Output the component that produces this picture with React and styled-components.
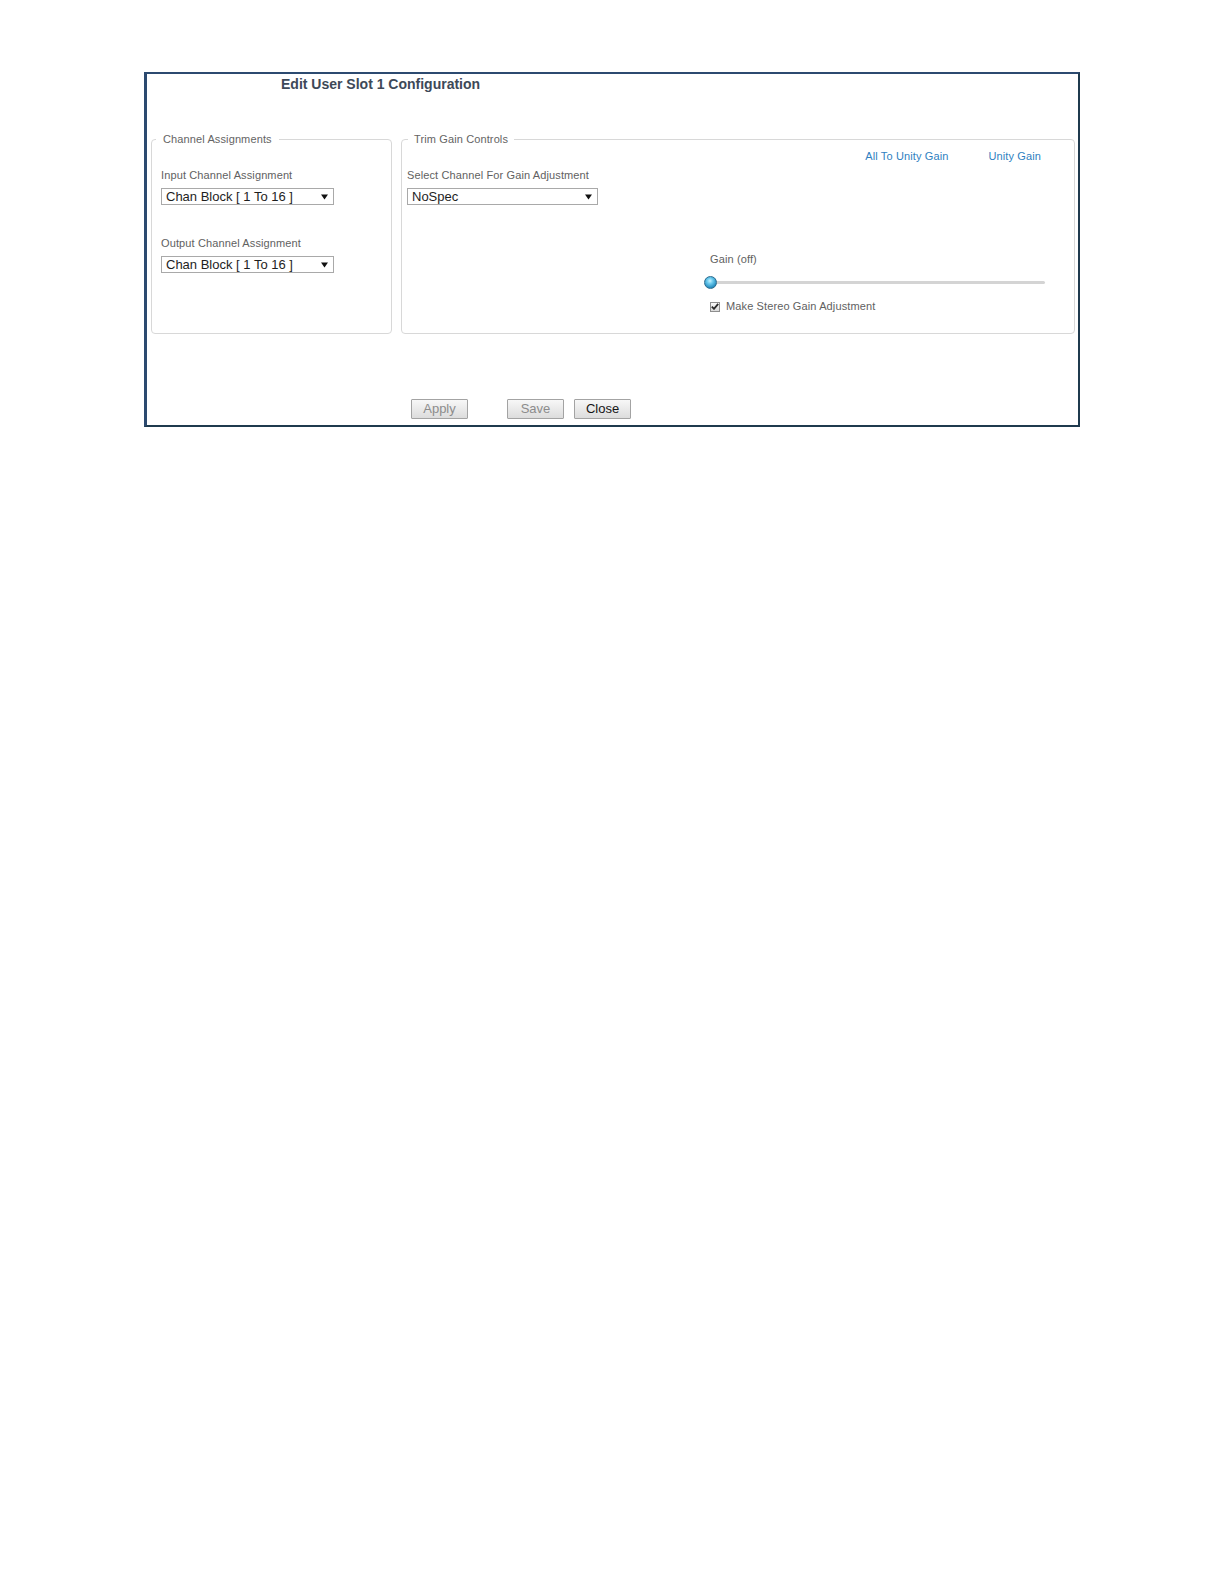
import React from "react";
import styled, { createGlobalStyle } from "styled-components";

const GlobalStyle = createGlobalStyle`
  html, body { margin: 0; padding: 0; background: #ffffff; }
  body { font-family: "Liberation Sans", Arial, sans-serif; }
  * { box-sizing: border-box; }
`;

const Page = styled.div`
  width: 1224px;
  min-height: 1584px;
  padding: 72px 0 0 144px;
`;

const Dialog = styled.div`
  width: 936px;
  height: 355px;
  border-style: solid;
  border-width: 2px 2px 2px 3px;
  border-color: #2c4a70 #1f3a4e #1f3a4e #2c4a70;
  background: #fff;
  display: flex;
  flex-direction: column;
`;

const Title = styled.h1`
  margin: 2px 0 0 0;
  padding-left: 134px;
  font-size: 14px;
  line-height: 16px;
  font-weight: bold;
  color: #3d4958;
`;

const PanelRow = styled.div`
  display: flex;
  gap: 9px;
  margin: 41px 3px 0 4px;
`;

const Panel = styled.fieldset`
  margin: 0;
  height: 201px;
  width: ${(p) => p.$width}px;
  border: 1px solid #d8d8d8;
  border-radius: 4px;
  padding: 0 ${(p) => p.$padRight}px 0 ${(p) => p.$padLeft}px;
  display: flex;
  flex-direction: column;
  min-width: 0;
`;

const Legend = styled.legend`
  margin-left: ${(p) => p.$offset}px;
  padding: 0 ${(p) => p.$pad}px;
  font-size: 11px;
  line-height: 13px;
  letter-spacing: 0.12px;
  color: #646464;
`;

const FieldLabel = styled.div`
  margin-top: ${(p) => p.$top}px;
  font-size: 11px;
  line-height: 13px;
  letter-spacing: 0.12px;
  color: #616161;
`;

const SelectBox = styled.div`
  margin-top: ${(p) => p.$top || 7}px;
  width: ${(p) => p.$width}px;
  height: 17px;
  border: 1px solid #a9a9a9;
  background: #ffffff;
  display: flex;
  align-items: center;
  justify-content: space-between;
  padding: 0 5px 0 4px;
  font-size: 13px;
  line-height: 15px;
  color: #1e1e1e;
`;

const Arrow = () => (
  <svg width="7" height="6" viewBox="0 0 7 6" aria-hidden="true">
    <polygon points="0,0.5 7,0.5 3.5,5.5" fill="#111" />
  </svg>
);

const LinkRow = styled.div`
  margin-top: 4px;
  padding-right: 4px;
  display: flex;
  justify-content: flex-end;
  gap: 40px;
`;

const ActionLink = styled.a`
  font-size: 11px;
  line-height: 13px;
  letter-spacing: 0.12px;
  color: #2f7fc1;
  text-decoration: none;
  cursor: pointer;
`;

const GainBlock = styled.div`
  margin: 48px 0 0 303px;
  display: flex;
  flex-direction: column;
`;

const GainLabel = styled.div`
  font-size: 11px;
  line-height: 13px;
  letter-spacing: 0.12px;
  color: #616161;
`;

const SliderTrack = styled.div`
  position: relative;
  margin-top: 10px;
  height: 13px;
  display: flex;
  align-items: center;
  &::before {
    content: "";
    display: block;
    width: 100%;
    height: 3px;
    border-radius: 2px;
    background: #d4d4d4;
  }
`;

const Thumb = styled.span`
  position: absolute;
  left: -6px;
  top: 0;
  width: 13px;
  height: 13px;
  border-radius: 50%;
  border: 1px solid #2b6c8f;
  background: radial-gradient(circle at 45% 35%, #c8f2ff 0%, #6ccbee 30%, #2a90c2 70%, #186690 100%);
`;

const CheckRow = styled.label`
  margin-top: 11px;
  display: flex;
  align-items: center;
  gap: 6px;
  font-size: 11px;
  line-height: 13px;
  letter-spacing: 0.12px;
  color: #616161;
`;

const CheckBox = styled.span`
  width: 10px;
  height: 10px;
  border: 1px solid #8e8e8e;
  background: linear-gradient(#fafafa, #d9d9d9);
  display: flex;
  align-items: center;
  justify-content: center;
`;

const ButtonRow = styled.div`
  margin-top: 65px;
  padding-left: 264px;
  display: flex;
`;

const Button = styled.button`
  margin-left: ${(p) => p.$gap || 0}px;
  width: 57px;
  height: 20px;
  padding: 0;
  border: 1px solid #a3a3a3;
  border-radius: 1px;
  background: linear-gradient(#f7f7f7, #dcdcdc);
  font-family: "Liberation Sans", Arial, sans-serif;
  font-size: 13px;
  line-height: 18px;
  color: ${(p) => (p.$disabled ? "#8c8c8c" : "#151515")};
`;

export default function App() {
  return (
    <>
      <GlobalStyle />
      <Page>
        <Dialog>
          <Title>Edit User Slot 1 Configuration</Title>
          <PanelRow>
            <Panel $width={241} $padLeft={9} $padRight={9}>
              <Legend $offset={-5} $pad={7}>Channel Assignments</Legend>
              <FieldLabel $top={23}>Input Channel Assignment</FieldLabel>
              <SelectBox $width={173} $top={6}>
                <span>Chan Block [ 1 To 16 ]</span>
                <Arrow />
              </SelectBox>
              <FieldLabel $top={32}>Output Channel Assignment</FieldLabel>
              <SelectBox $width={173} $top={6}>
                <span>Chan Block [ 1 To 16 ]</span>
                <Arrow />
              </SelectBox>
            </Panel>
            <Panel $width={674} $padLeft={5} $padRight={29}>
              <Legend $offset={1} $pad={6}>Trim Gain Controls</Legend>
              <LinkRow>
                <ActionLink>All To Unity Gain</ActionLink>
                <ActionLink>Unity Gain</ActionLink>
              </LinkRow>
              <FieldLabel $top={6}>Select Channel For Gain Adjustment</FieldLabel>
              <SelectBox $width={191} $top={6}>
                <span>NoSpec</span>
                <Arrow />
              </SelectBox>
              <GainBlock>
                <GainLabel>Gain (off)</GainLabel>
                <SliderTrack>
                  <Thumb />
                </SliderTrack>
                <CheckRow>
                  <CheckBox>
                    <svg width="8" height="7" viewBox="0 0 8 7" aria-hidden="true">
                      <path d="M0.8 3.6 L3 5.8 L7.2 0.8" fill="none" stroke="#2a2a2a" strokeWidth="1.8" />
                    </svg>
                  </CheckBox>
                  Make Stereo Gain Adjustment
                </CheckRow>
              </GainBlock>
            </Panel>
          </PanelRow>
          <ButtonRow>
            <Button $disabled>Apply</Button>
            <Button $disabled $gap={39}>Save</Button>
            <Button $gap={10}>Close</Button>
          </ButtonRow>
        </Dialog>
      </Page>
    </>
  );
}
